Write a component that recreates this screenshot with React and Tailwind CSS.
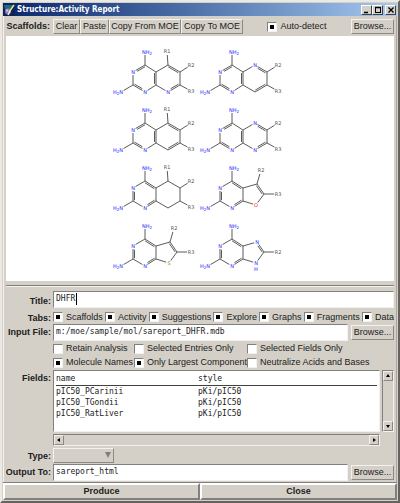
import React from "react";

const FACE = "bg-[#d4d0c8]";
const RAISED =
  "border border-t-[#f4f2ee] border-l-[#f4f2ee] border-b-[#8c8982] border-r-[#8c8982]";
const SUNKEN =
  "border border-t-[#808080] border-l-[#808080] border-b-[#f4f2ee] border-r-[#f4f2ee]";
const MONO = "font-['DejaVu_Sans_Mono',monospace] text-[8px] text-[#222222]";

/* ---------- molecule drawings ---------- */

const N = "#2626ff";
const C = "#484848";

const SIX = {
  c4: [32, 17],
  n3: [20, 24],
  c2: [20, 37],
  n1: [32, 44],
  c8a: [43, 37],
  c4a: [43, 24],
  c5: [55, 17],
  c6: [67, 24],
  c7: [67, 37],
  c8: [55, 44],
};
const FIVE = { ...SIX, c5: [57, 20], c6: [64, 30], c8: [56, 41] };

const LEFT_A = ["c4=n3", "n3-c2", "c2=n1", "n1-c8a", "c8a=c4a", "c4a-c4"];
const LEFT_B = ["c4-n3", "n3=c2", "c2-n1", "n1=c8a", "c8a-c4a", "c4a=c4"];
const AROMATIC = ["c4a-c5", "c5=c6", "c6-c7", "c7=c8", "c8-c8a"];
const SATURATED = ["c4a-c5", "c5-c6", "c6-c7", "c7-c8", "c8-c8a"];
const FIVE_RING = ["c4a-c5", "c5=c6", "c6-c8", "c8-c8a"];
const CENTER_SIX = [55, 30.5];
const CENTER_LEFT = [31.5, 30.5];
const CENTER_FIVE = [53, 30.5];

const R1 = { from: "c5", to: [54, 3], text: "R1" };
const R2 = { from: "c6", to: [78, 17], text: "R2" };
const R3 = { from: "c7", to: [78, 43], text: "R3" };
const FIVE_R2 = { from: "c5", to: [61, 6], text: "R2" };
const FIVE_R3 = { from: "c6", to: [78, 30], text: "R3" };

const MOLECULES = [
  { id: "a", pts: SIX, left: LEFT_A, right: AROMATIC, atoms: { c8: "N" }, subs: [R1, R2, R3] },
  { id: "b", pts: SIX, left: LEFT_A, right: AROMATIC, atoms: { c5: "N" }, subs: [R2, R3] },
  { id: "c", pts: SIX, left: LEFT_A, right: AROMATIC, atoms: {}, subs: [R1, R2, R3] },
  { id: "d", pts: SIX, left: LEFT_A, right: AROMATIC, atoms: { c5: "N", c8: "N" }, subs: [R2, R3] },
  { id: "e", pts: SIX, left: LEFT_B, right: SATURATED, atoms: {}, subs: [R1, R2, R3] },
  { id: "f", pts: FIVE, left: LEFT_B, right: FIVE_RING, atoms: { c8: "O" }, subs: [FIVE_R2, FIVE_R3] },
  { id: "g", pts: FIVE, left: LEFT_B, right: FIVE_RING, atoms: { c8: "S" }, subs: [FIVE_R2, FIVE_R3] },
  {
    id: "h",
    pts: FIVE,
    left: LEFT_B,
    right: FIVE_RING,
    atoms: { c5: "N", c8: "N" },
    subs: [{ ...FIVE_R3, text: "R2" }],
    nh: true,
  },
];

const ATOM_COLORS = { N, O: "#ff2020", S: "#9c8410" };

/* Moves the end of a bond away from a lettered atom. */
function trim(a, b, cut) {
  const d = Math.hypot(b[0] - a[0], b[1] - a[1]);
  return [a[0] + ((b[0] - a[0]) * cut) / d, a[1] + ((b[1] - a[1]) * cut) / d];
}

function Bond({ a, b, cutA = 0, cutB = 0, double, center }) {
  const p = trim(a, b, cutA);
  const q = trim(b, a, cutB);
  const dx = q[0] - p[0];
  const dy = q[1] - p[1];
  const len = Math.hypot(dx, dy);
  let nx = -dy / len;
  let ny = dx / len;
  if (center && nx * (center[0] - p[0]) + ny * (center[1] - p[1]) < 0) {
    nx = -nx;
    ny = -ny;
  }
  return (
    <g stroke={C} strokeWidth="0.9">
      <line x1={p[0]} y1={p[1]} x2={q[0]} y2={q[1]} />
      {double && (
        <line
          x1={p[0] + nx * 1.5 + dx * 0.08}
          y1={p[1] + ny * 1.5 + dy * 0.08}
          x2={q[0] + nx * 1.5 - dx * 0.08}
          y2={q[1] + ny * 1.5 - dy * 0.08}
        />
      )}
    </g>
  );
}

function Molecule({ pts, left, right, atoms, subs, nh }) {
  const lettered = { n3: "N", n1: "N", ...atoms };
  const ring = (list, center) =>
    list.map((bond) => {
      const [from, to] = bond.split(/[-=]/);
      return (
        <Bond
          key={bond}
          a={pts[from]}
          b={pts[to]}
          cutA={lettered[from] ? 3 : 0}
          cutB={lettered[to] ? 3 : 0}
          double={bond.includes("=")}
          center={center}
        />
      );
    });
  return (
    <svg
      viewBox="0 0 87 58"
      className="h-[58px] w-[87px] overflow-visible font-['DejaVu_Sans',sans-serif] text-[5px]"
    >
      {ring(left, CENTER_LEFT)}
      {ring(right, pts === SIX ? CENTER_SIX : CENTER_FIVE)}
      <Bond a={pts.c4} b={[32, 4]} cutB={3} />
      <Bond a={pts.c2} b={[8, 44]} cutB={3} />
      {subs.map((s) => (
        <React.Fragment key={s.text}>
          <Bond a={pts[s.from]} b={s.to} cutB={4} />
          <text x={s.to[0]} y={s.to[1] + 2} textAnchor="middle" fill="#555555">
            {s.text}
          </text>
        </React.Fragment>
      ))}
      {Object.entries(lettered).map(([id, letter]) => (
        <text key={id} x={pts[id][0]} y={pts[id][1] + 2} textAnchor="middle" fill={ATOM_COLORS[letter]}>
          {letter}
        </text>
      ))}
      <text x="29" y="6" fill={N}>
        NH<tspan fontSize="4" dy="1">2</tspan>
      </text>
      <text x="0" y="46" fill={N}>
        H<tspan fontSize="4" dy="1">2</tspan>
        <tspan dy="-1">N</tspan>
      </text>
      {nh && (
        <text x="56" y="49" textAnchor="middle" fill={N}>
          H
        </text>
      )}
    </svg>
  );
}

/* ---------- controls ---------- */

function Button({ children, className = "" }) {
  return (
    <button
      type="button"
      className={`h-[15px] shrink-0 whitespace-nowrap text-center leading-[13px] ${FACE} ${RAISED} ${className}`}
    >
      {children}
    </button>
  );
}

function Check({ label, checked = false }) {
  return (
    <label className="flex items-center gap-[3px] whitespace-nowrap leading-[11px]">
      <input
        type="checkbox"
        defaultChecked={checked}
        className={`grid h-[10px] w-[10px] shrink-0 appearance-none place-content-center bg-white checked:before:block checked:before:h-1 checked:before:w-1 checked:before:bg-black ${SUNKEN}`}
      />
      {label}
    </label>
  );
}

function TextBox({ id, value }) {
  return (
    <input
      id={id}
      type="text"
      defaultValue={value}
      className={`h-[17px] w-full min-w-0 flex-1 bg-white px-[2px] pb-[2px] outline-none ${SUNKEN} ${MONO}`}
    />
  );
}

function Row({ label, htmlFor, children, className = "" }) {
  const Tag = htmlFor ? "label" : "span";
  return (
    <div className={`flex gap-[2px] ${className}`}>
      <Tag htmlFor={htmlFor} className="flex w-[47px] shrink-0 justify-end whitespace-nowrap pt-[3px] font-bold leading-[11px]">
        {label}
      </Tag>
      <div className="min-w-0 flex-1">{children}</div>
    </div>
  );
}

const ARROWS = {
  up: "M1 4L3 1L5 4Z",
  down: "M1 2L3 5L5 2Z",
  left: "M4 1L1 3L4 5Z",
  right: "M2 1L5 3L2 5Z",
};

function ScrollButton({ dir }) {
  return (
    <button
      type="button"
      aria-label={`Scroll ${dir}`}
      className={`flex h-[10px] w-[10px] shrink-0 items-center justify-center ${FACE} ${RAISED}`}
    >
      <svg viewBox="0 0 6 6" className="h-[6px] w-[6px] shrink-0">
        <path d={ARROWS[dir]} fill="#000000" />
      </svg>
    </button>
  );
}

function CaptionButton({ label, children }) {
  return (
    <button
      type="button"
      aria-label={label}
      className={`flex h-[10px] w-[11px] items-center justify-center ${FACE} border border-t-white border-l-white border-b-[#404040] border-r-[#404040]`}
    >
      <svg viewBox="0 0 8 8" className="h-2 w-2 shrink-0" fill="none" stroke="#000000">
        {children}
      </svg>
    </button>
  );
}

const TABS = ["Scaffolds", "Activity", "Suggestions", "Explore", "Graphs", "Fragments", "Data"];
const FIELDS = ["pIC50_PCarinii", "pIC50_TGondii", "pIC50_RatLiver"];

export default function App() {
  return (
    <div
      className={`flex min-h-screen w-full flex-col border-2 border-t-[#ece9e2] border-l-[#ece9e2] border-b-[#66625f] border-r-[#66625f] p-px font-['Liberation_Sans',Arial,sans-serif] text-[9px] text-[#202020] ${FACE}`}
    >
      <header className="flex h-[13px] items-center bg-linear-to-r from-[#0a246a] to-[#a6caf0] pr-px">
        <svg viewBox="0 0 12 12" className="mr-[2px] h-3 w-3 shrink-0">
          <rect width="12" height="12" fill="#0c2550" />
          <path d="M1 1H10L6 7L2 6Z" fill="#147080" />
          <circle cx="5" cy="7.500" r="3" fill="#9a72b8" />
          <circle cx="4" cy="6.500" r="1" fill="#e4d4f0" />
          <path d="M6 8L11 1" stroke="#e6e08a" strokeWidth="1.600" />
          <path d="M5 11L7 7" stroke="#f4f4f4" strokeWidth="1.200" />
        </svg>
        <h1 className="flex-1 whitespace-nowrap font-['DejaVu_Sans_Condensed','DejaVu_Sans',sans-serif] text-[8px] font-bold leading-[13px] text-white">
          Structure:Activity Report
        </h1>
        <div className="flex">
          <CaptionButton label="Minimize">
            <path d="M1 6.500H5" strokeWidth="1.500" />
          </CaptionButton>
          <CaptionButton label="Maximize">
            <path d="M1 1.500H7" strokeWidth="1.500" />
            <path d="M1.500 1V7M6.500 1V7M1 6.500H7" />
          </CaptionButton>
          <span className="w-[2px]" />
          <CaptionButton label="Close">
            <path d="M1.500 1.500L6.500 6.500M6.500 1.500L1.500 6.500" strokeWidth="1.300" />
          </CaptionButton>
        </div>
      </header>

      <main className="flex flex-1 flex-col border-l border-r border-l-[#f4f2ee] border-r-[#aaa69f] pr-[2px]">
        <div className="flex items-center py-[3px] pb-[2px]">
          <span className="mr-[3px] flex w-[46px] shrink-0 justify-end whitespace-nowrap font-bold">Scaffolds:</span>
          <Button className="w-[27px]">Clear</Button>
          <Button className="w-[29px]">Paste</Button>
          <Button className="w-[72px]">Copy From MOE</Button>
          <Button className="w-[62px]">Copy To MOE</Button>
          <div className="flex flex-1 justify-center">
            <Check label="Auto-detect" checked />
          </div>
          <Button className="w-[43px]">Browse...</Button>
        </div>

        <section aria-label="Scaffolds" className="ml-[2px] flex flex-1 items-start justify-center bg-white pt-3">
          <div className="grid grid-cols-2">
            {MOLECULES.map(({ id, ...m }) => (
              <Molecule key={id} {...m} />
            ))}
          </div>
        </section>

        <hr className="mt-1 mb-1 ml-[2px] h-[2px] border-t border-b border-t-[#808080] border-b-[#f4f2ee]" />

        <form className="flex flex-col">
          <Row label="Title:" htmlFor="title" className="items-center">
            <div className={`flex h-[17px] items-center bg-white pl-[2px] pb-[2px] ${SUNKEN}`}>
              <input
                id="title"
                type="text"
                defaultValue="DHFR"
                className={`w-[21px] border-r border-r-black outline-none ${MONO}`}
              />
            </div>
          </Row>
          <Row label="Tabs:" className="mt-[2px] h-[14px] items-center">
            <div className="flex justify-between">
              {TABS.map((t) => (
                <Check key={t} label={t} checked />
              ))}
            </div>
          </Row>
          <Row label="Input File:" htmlFor="input-file">
            <div className="flex items-center gap-[3px]">
              <TextBox id="input-file" value="m:/moe/sample/mol/sareport_DHFR.mdb" />
              <Button className="w-[43px]">Browse...</Button>
            </div>
          </Row>
          <Row label="" className="mt-[2px]">
            <div className="grid grid-cols-[81px_113px_1fr] gap-y-[3px]">
              <Check label="Retain Analysis" />
              <Check label="Selected Entries Only" />
              <Check label="Selected Fields Only" />
              <Check label="Molecule Names" checked />
              <Check label="Only Largest Component" checked />
              <Check label="Neutralize Acids and Bases" />
            </div>
          </Row>
          <Row label="Fields:" className="mt-[2px]">
            <div className="grid grid-cols-[1fr_12px] gap-[2px]">
              <div className={`h-[62px] bg-white px-[2px] pt-[2px] ${SUNKEN}`}>
                <table className={`w-full table-fixed border-collapse text-left leading-[11px] ${MONO}`}>
                  <thead>
                    <tr className="border-b border-b-[#404040]">
                      <th className="w-[142px] p-0 pb-px font-normal leading-[11px]">name</th>
                      <th className="p-0 pb-px font-normal leading-[11px]">style</th>
                    </tr>
                  </thead>
                  <tbody>
                    {FIELDS.map((f) => (
                      <tr key={f}>
                        <td className="p-0 leading-[11px]">{f}</td>
                        <td className="p-0 leading-[11px]">pKi/pIC50</td>
                      </tr>
                    ))}
                  </tbody>
                </table>
              </div>
              <div className={`flex flex-col justify-between ${SUNKEN}`}>
                <ScrollButton dir="up" />
                <ScrollButton dir="down" />
              </div>
              <div className={`flex justify-between ${SUNKEN}`}>
                <ScrollButton dir="left" />
                <ScrollButton dir="right" />
              </div>
            </div>
          </Row>
          <Row label="Type:" htmlFor="type" className="mt-[2px]">
            <div className="relative h-[15px] w-[61px]">
              <select id="type" disabled className={`h-full w-full appearance-none ${FACE} ${RAISED}`}>
                <option></option>
              </select>
              <svg viewBox="0 0 6 6" className="pointer-events-none absolute top-1 right-[3px] h-[6px] w-[6px]">
                <path d="M0 0H6L3 6Z" fill="#808080" />
              </svg>
            </div>
          </Row>
          <Row label="Output To:" htmlFor="output" className="mt-px mb-px">
            <div className="flex items-center gap-[3px]">
              <TextBox id="output" value="sareport_html" />
              <Button className="w-[43px]">Browse...</Button>
            </div>
          </Row>
        </form>
      </main>

      <footer className="grid grid-cols-2 border-t border-t-[#808080] font-bold">
        {["Produce", "Close"].map((t) => (
          <button
            key={t}
            type="button"
            className={`h-[17px] border-2 border-t-white border-l-white border-b-[#808080] border-r-[#808080] leading-[13px] ${FACE}`}
          >
            {t}
          </button>
        ))}
      </footer>
    </div>
  );
}
